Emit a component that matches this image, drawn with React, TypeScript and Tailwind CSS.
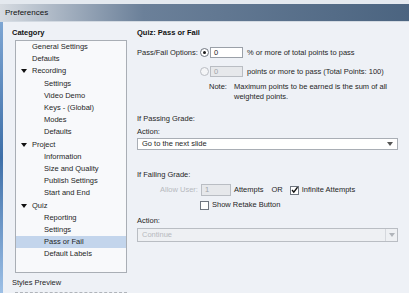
const tree: { label: string; level: number; open?: boolean; selected?: boolean }[] = [
  { label: "General Settings", level: 1 },
  { label: "Defaults", level: 1 },
  { label: "Recording", level: 1, open: true },
  { label: "Settings", level: 2 },
  { label: "Video Demo", level: 2 },
  { label: "Keys - (Global)", level: 2 },
  { label: "Modes", level: 2 },
  { label: "Defaults", level: 2 },
  { label: "Project", level: 1, open: true },
  { label: "Information", level: 2 },
  { label: "Size and Quality", level: 2 },
  { label: "Publish Settings", level: 2 },
  { label: "Start and End", level: 2 },
  { label: "Quiz", level: 1, open: true },
  { label: "Reporting", level: 2 },
  { label: "Settings", level: 2 },
  { label: "Pass or Fail", level: 2, selected: true },
  { label: "Default Labels", level: 2 },
];

const Radio = ({ checked, disabled }: { checked?: boolean; disabled?: boolean }) => (
  <span
    className={`flex h-[9px] w-[9px] shrink-0 items-center justify-center rounded-full border ${
      disabled ? "border-[#b9bdc3] bg-[#f4f5f7]" : "border-[#6f7680] bg-white"
    }`}
  >
    {checked && <span className="h-[3px] w-[3px] rounded-full bg-[#1a1a1a]" />}
  </span>
);

const Check = ({ checked }: { checked?: boolean }) => (
  <span className="flex h-[9px] w-[9px] shrink-0 items-center justify-center border border-[#6f7680] bg-white">
    {checked && (
      <svg width="8" height="8" viewBox="0 0 8 8">
        <path d="M1.2 4 L3.2 6.5 L7.5 0.8" fill="none" stroke="#111" strokeWidth="1.6" />
      </svg>
    )}
  </span>
);

const Arrow = ({ color }: { color: string }) => (
  <svg width="6" height="4" viewBox="0 0 6 4">
    <path d="M0 0 H6 L3 4 Z" fill={color} />
  </svg>
);

export default function App() {
  return (
    <div
      className="flex h-[293px] w-[409px] flex-col overflow-hidden bg-[#eef1f6] text-[7.5px] leading-[10px] text-[#1f1f1f]"
      style={{ fontFamily: "Tahoma, 'Liberation Sans', sans-serif" }}
    >
      {/* title bar */}
      <div className="h-[4px] shrink-0 bg-[#e4e9ef]" />
      <div className="flex h-[17px] shrink-0 items-center bg-gradient-to-r from-[#d6dbe1] via-[#6b8099] via-35% to-[#4b6480] px-[5px] text-[8px] text-[#111]">
        Preferences
      </div>
      <div className="h-px shrink-0 bg-[#d3dae2]" />

      <div className="flex min-h-0 flex-1">
        <div className="w-[3px] shrink-0 bg-gradient-to-b from-[#7ea6d3] via-[#3d6fa8] to-[#9dc0e6]" />

        {/* left column */}
        <div className="flex w-[126px] shrink-0 flex-col pl-[9px]">
          <div className="pt-[6px] font-bold text-[#111]">Category</div>
          <div className="mt-[2px] ml-[3px] flex h-[233px] w-[112px] flex-col border border-[#a9aeb5] bg-[#f8f9fb]">
            {tree.map((t, i) => (
              <div
                key={i}
                className={`flex h-[12.2px] shrink-0 items-center ${t.selected ? "bg-[#c3d5ec]" : ""}`}
              >
                <span className="flex w-[16px] justify-center">
                  {t.open && <Arrow color="#111" />}
                </span>
                <span className={t.level === 2 ? "pl-[12px]" : ""}>{t.label}</span>
              </div>
            ))}
          </div>
          <div className="pt-[5px]">Styles Preview</div>
          <div className="mt-[4px] ml-[3px] w-[112px] border-t border-dashed border-[#b0b4ba]" />
        </div>

        {/* right panel */}
        <div className="flex min-w-0 flex-1 flex-col pl-[8px] pr-[11px]">
          <div className="pt-[6px] font-bold text-[#111]">Quiz: Pass or Fail</div>

          <div className="mt-[9px] flex h-[11px] items-center">
            <span className="w-[63px] shrink-0">Pass/Fail Options:</span>
            <Radio checked />
            <span className="ml-[1px] flex h-[11px] w-[33px] items-center border border-[#9aa0a8] bg-white pl-[3px]">0</span>
            <span className="ml-[4px] whitespace-nowrap">% or more of total points to pass</span>
          </div>

          <div className="mt-[8px] flex h-[11px] items-center">
            <span className="w-[63px] shrink-0" />
            <Radio disabled />
            <span className="ml-[1px] flex h-[11px] w-[33px] items-center border border-[#b9bdc3] bg-[#e6e8eb] pl-[3px] text-[#a0a4a9]">0</span>
            <span className="ml-[4px] whitespace-nowrap">points or more to pass (Total Points: 100)</span>
          </div>

          <div className="mt-[5px] flex">
            <span className="ml-[72px] w-[25px] shrink-0">Note:</span>
            <span>
              Maximum points to be earned is the sum of all
              <br />
              weighted points.
            </span>
          </div>

          <div className="mt-[12px]">If Passing Grade:</div>
          <div className="mt-[3px]">Action:</div>
          <div className="mt-[1px] flex h-[12px] items-center justify-between border border-[#a9aeb5] bg-white pr-[4px] pl-[4px]">
            <span>Go to the next slide</span>
            <Arrow color="#555" />
          </div>

          <div className="mt-[20px]">If Failing Grade:</div>
          <div className="mt-[4px] flex h-[12px] items-center">
            <span className="ml-[23px] text-[#b6b9be]">Allow User:</span>
            <span className="ml-[3px] flex h-[12px] w-[30px] items-center border border-[#b9bdc3] bg-[#e6e8eb] pl-[3px] text-[#a0a4a9]">1</span>
            <span className="ml-[3px]">Attempts</span>
            <span className="ml-[8px]">OR</span>
            <span className="ml-[7px]"><Check checked /></span>
            <span className="ml-[3px]">Infinite Attempts</span>
          </div>
          <div className="mt-[4px] flex items-center">
            <span className="ml-[63px]"><Check /></span>
            <span className="ml-[3px]">Show Retake Button</span>
          </div>

          <div className="mt-[6px]">Action:</div>
          <div className="mt-[2px] flex h-[14px] items-center justify-between border border-[#b9bdc3] bg-[#eef0f3] pl-[4px] text-[#b6b9be]">
            <span>Continue</span>
            <span className="flex h-full w-[12px] items-center justify-center border-l border-[#d5d8dd]">
              <Arrow color="#b0b4ba" />
            </span>
          </div>
        </div>
      </div>
    </div>
  );
}
